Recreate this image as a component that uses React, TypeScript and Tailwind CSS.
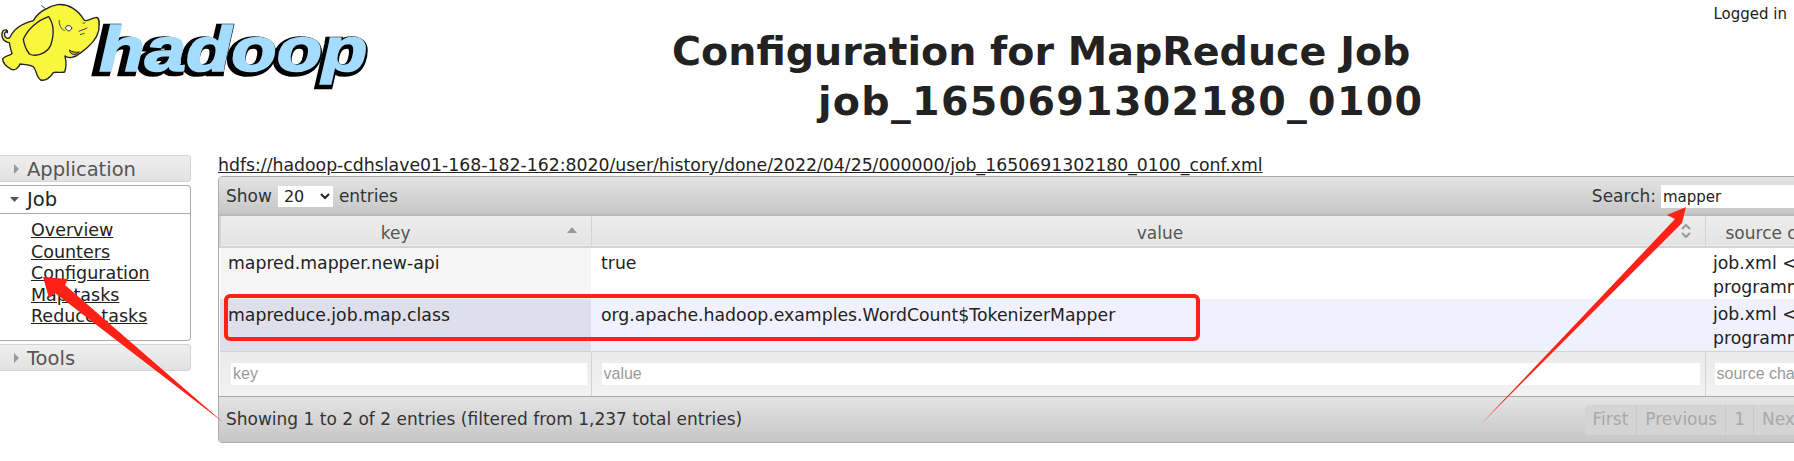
import React from 'react';

const bodyFont = { fontFamily: '"DejaVu Sans", sans-serif' };

const HadoopLogo = () => (
  <svg width="400" height="130" viewBox="0 0 1200 390" className="block shrink-0">
    {/* wordmark */}
    <g fontFamily="'Liberation Sans', sans-serif" fontWeight="bold" fontStyle="italic" fontSize="190">
      <text x="284" y="220" textLength="815" lengthAdjust="spacingAndGlyphs" fill="#000" stroke="#000" strokeWidth="20" strokeLinejoin="miter">hadoop</text>
      <text x="298" y="214" textLength="804" lengthAdjust="spacingAndGlyphs" fill="#a4dcff" stroke="#a4dcff" strokeWidth="5" strokeLinejoin="miter">hadoop</text>
    </g>
    {/* elephant */}
    <path d="M28 128 C8 125 2 108 8 94 C14 86 24 90 22 98 C18 92 12 98 14 106 C16 114 24 118 30 112 C40 90 60 72 100 62 C112 40 140 20 172 14 C205 10 235 30 252 60 C262 68 276 52 290 52 C300 54 298 72 296 92 C290 120 266 142 240 160 C225 174 205 176 195 168 C200 190 198 205 194 216 C180 220 168 214 160 218 C152 232 136 244 122 240 C106 228 110 208 100 200 C85 192 72 194 60 192 C56 205 44 212 34 208 C20 200 8 188 8 176 C20 164 32 168 36 160 C32 150 30 140 28 128 Z" fill="#f8f63e" stroke="#222" strokeWidth="4" strokeLinejoin="round" />
    <path d="M70 118 C82 90 110 62 146 50 C160 70 164 100 152 136 C140 160 110 172 88 162 C78 148 72 132 70 118 Z" fill="#f8f63e" stroke="#222" strokeWidth="4" strokeLinejoin="round" />
    <path d="M124 16 L138 28 M178 60 C176 74 184 88 194 92" fill="none" stroke="#444" strokeWidth="3" />
    <path d="M196 82 C202 74 212 76 216 84 C210 96 200 96 196 82 Z" fill="#fff" stroke="#222" strokeWidth="3" />
    <path d="M236 94 L262 84 M240 104 L254 100 M248 70 L256 68" stroke="#444" strokeWidth="3" fill="none" />
    <path d="M208 150 C212 166 226 168 238 156 C228 158 216 156 208 150 Z" fill="#d8a020" stroke="#222" strokeWidth="3" />
  </svg>
);

const Caret = ({ open }: { open?: boolean }) =>
  open ? (
    <svg width="10" height="6" viewBox="0 0 10 6" className="shrink-0"><path d="M0 0h9L4.5 5z" fill="#555" /></svg>
  ) : (
    <svg width="6" height="10" viewBox="0 0 6 10" className="shrink-0 ml-0.5"><path d="M0 0l5 5-5 5z" fill="#999" /></svg>
  );

const NavHeader = ({ label }: { label: string }) => (
  <div className="flex items-center gap-[7px] h-[27px] pl-[12px] border border-l-0 rounded-r-[4px] text-[19.5px] leading-none border-[#d3d3d3] bg-linear-to-b from-[#efefef] to-[#e2e2e2] text-[#555]">
    <Caret />
    <span className="pt-[2px]">{label}</span>
  </div>
);

const Sidebar = () => (
  <div className="w-[191px] shrink-0 pt-[155px]">
    <NavHeader label="Application" />
    <div className="mt-[3px] border border-l-0 border-[#aaa] rounded-r-[4px]">
      <div className="flex items-center gap-[7px] h-[28px] pl-[10px] border-b border-[#aaa] text-[19.5px] text-[#222]">
        <Caret open />
        <span>Job</span>
      </div>
      <ul className="pl-[31px] pt-[6px] h-[126px] text-[17.5px] leading-[21.5px] text-[#222]">
        {['Overview', 'Counters', 'Configuration', 'Map tasks', 'Reduce tasks'].map((link) => (
          <li key={link}><a className="underline">{link}</a></li>
        ))}
      </ul>
    </div>
    <div className="mt-[3px]"><NavHeader label="Tools" /></div>
  </div>
);

const cellBorder = 'border-r border-[#d3d3d3]';

const ConfTable = () => (
  <table className="table-fixed border-collapse w-full text-[#222] text-[17.3px] leading-[24px]">
    <colgroup>
      <col className="w-[371px]" />
      <col className="w-[1114px]" />
      <col className="w-[161px]" />
    </colgroup>
    <thead>
      <tr className="h-[31px] text-[#555] text-[17px] border-b-2 border-[#d3d3d3] bg-linear-to-b from-[#ededed] to-[#e4e4e4]">
        <th className={`font-normal relative pr-[20px] pt-[3px] ${cellBorder} border-l-2 border-l-[#d3d3d3]`}>
          key
          <svg width="10" height="6" viewBox="0 0 10 6" className="absolute right-[14px] top-[11px]"><path d="M0 6L5 0l5 6z" fill="#999" /></svg>
        </th>
        <th className={`font-normal relative pl-[24px] pt-[3px] ${cellBorder}`}>
          value
          <svg width="10" height="14" viewBox="0 0 10 14" className="absolute right-[14px] top-[8px]"><path d="M1 5l4-4 4 4M1 9l4 4 4-4" fill="none" stroke="#999" strokeWidth="2" /></svg>
        </th>
        <th className="font-normal text-left pl-[20px] pt-[3px] whitespace-nowrap">source chain</th>
      </tr>
    </thead>
    <tbody>
      <tr className="h-[51px] align-top">
        <td className="bg-[#f6f6f6] pl-[8px] pt-[3px]">mapred.mapper.new-api</td>
        <td className="bg-white pl-[10px] pt-[3px]">true</td>
        <td className="bg-white pl-[8px] pt-[3px] whitespace-nowrap">job.xml &lt;- this file<br />programmatically</td>
      </tr>
      <tr className="h-[52px] align-top">
        <td className="bg-[#dfdfeb] pl-[8px] pt-[4px]">mapreduce.job.map.class</td>
        <td className="bg-[#f1f1fd] pl-[10px] pt-[4px]">org.apache.hadoop.examples.WordCount$TokenizerMapper</td>
        <td className="bg-[#f1f1fd] pl-[8px] pt-[3px] whitespace-nowrap">job.xml &lt;- this file<br />programmatically</td>
      </tr>
    </tbody>
    <tfoot>
      <tr className="h-[45px] border-t border-[#d3d3d3] bg-linear-to-b from-[#ebebeb] to-[#f2f2f2]">
        {[
          ['key', 'pl-[11px] pr-[4px]'],
          ['value', 'pl-[10px] pr-[5px]'],
          ['source chain', 'pl-[9px] pr-0'],
        ].map(([name, pad]) => (
          <th key={name} className={`font-normal ${pad} ${name === 'source chain' ? '' : cellBorder}`}>
            <input
              readOnly
              placeholder={name}
              className="block w-full h-[22px] bg-white px-[2px] text-[16px] placeholder:text-[#9a9a9a] outline-none"
              style={{ fontFamily: '"Liberation Sans", sans-serif' }}
            />
          </th>
        ))}
      </tr>
    </tfoot>
  </table>
);

const Pager = () => (
  <div className="flex h-[30px] rounded-[4px] bg-[#d4d4d4] text-[#a8a8a8] text-[17px]">
    {['First', 'Previous', '1', 'Next', 'Last'].map((page) => (
      <span key={page} className="flex items-center px-[8px] border-r border-[#c8c8c8] last:border-r-0">{page}</span>
    ))}
  </div>
);

const Annotations = () => (
  <>
    <div className="absolute left-[224px] top-[294px] w-[976px] h-[47px] border-4 border-[#ff2116] rounded-[6px] pointer-events-none" />
    <svg width="1794" height="461" className="absolute left-0 top-0 pointer-events-none">
      <path d="M224 423 L65 285 L68 279 L43 277 L49 298 L55 293 Z" fill="#ff2116" />
      <path d="M1480 425 L1682 223 L1686 207 L1667 215 L1675 219 Z" fill="#ff2116" />
    </svg>
  </>
);

export default function App() {
  return (
    <div className="relative w-[1794px] h-[461px] overflow-hidden bg-white text-[#222]" style={bodyFont}>
      <div className="absolute left-0 top-0"><HadoopLogo /></div>
      <div className="absolute right-[7px] top-[2px] text-[15px] leading-[24px] text-[#222]">Logged in</div>

      <div className="flex">
        <Sidebar />
        <main className="ml-[27px] w-[1646px] shrink-0">
          <div className="h-[155px] -ml-[218px] pl-[672px] pt-[26px] font-bold text-[39.6px] leading-[50px] text-[#222] whitespace-nowrap">
            <div>Configuration for MapReduce Job</div>
            <div className="ml-[146px] tracking-[1.3px]">job_1650691302180_0100</div>
          </div>
          <a className="block h-[21px] pt-[1px] underline text-[17.3px] leading-[19px] text-[#222] whitespace-nowrap">
            hdfs://hadoop-cdhslave01-168-182-162:8020/user/history/done/2022/04/25/000000/job_1650691302180_0100_conf.xml
          </a>
          <div className="border border-[#aaa] rounded-[4px] overflow-hidden">
            <div className="flex items-center justify-between h-[39px] pt-[2px] pl-[7px] pr-[8px] border-b-2 border-[#bbb] bg-linear-to-b from-[#e4e4e4] to-[#c6c6c6] text-[17px] text-[#333]">
              <div className="flex items-center gap-[6px]">
                Show
                <select defaultValue="20" className="w-[55px] h-[21px] bg-white text-[16px] text-[#222] outline-none pl-[2px]">
                  <option>20</option>
                </select>
                entries
              </div>
              <div className="flex items-center gap-[5px]">
                Search:
                <input readOnly value="mapper" className="w-[194px] h-[23px] bg-white px-[2px] text-[15px] text-[#222] outline-none" />
              </div>
            </div>
            <ConfTable />
            <div className="flex items-center justify-between h-[46px] pl-[7px] pr-[1px] border-t border-[#aaa] bg-linear-to-b from-[#e4e4e4] to-[#c6c6c6] text-[17px] text-[#333]">
              <span>Showing 1 to 2 of 2 entries (filtered from 1,237 total entries)</span>
              <Pager />
            </div>
          </div>
        </main>
      </div>

      <Annotations />
    </div>
  );
}
